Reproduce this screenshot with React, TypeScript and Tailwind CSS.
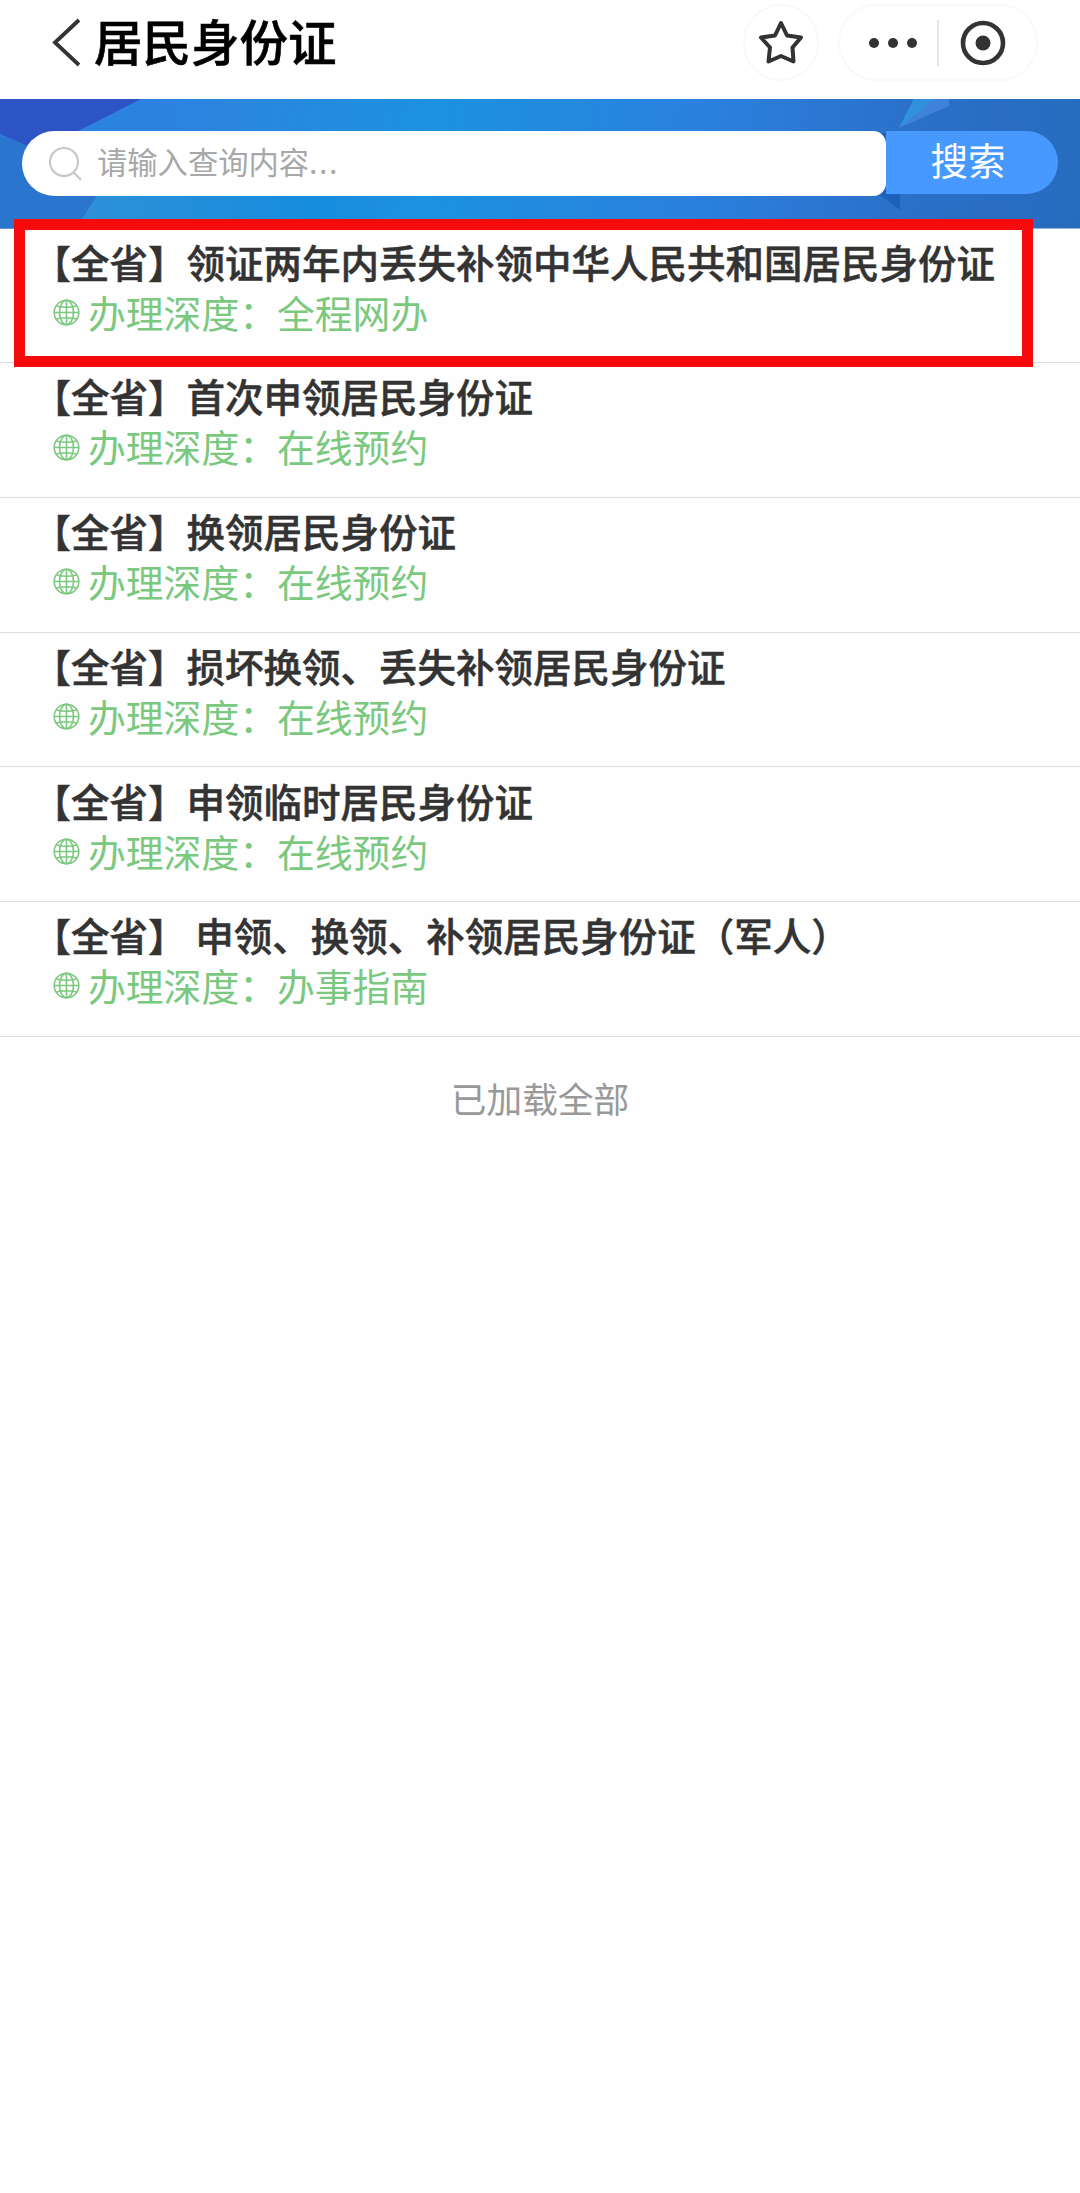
const rows = [
  { title: "【全省】领证两年内丢失补领中华人民共和国居民身份证", depth: "全程网办" },
  { title: "【全省】首次申领居民身份证", depth: "在线预约" },
  { title: "【全省】换领居民身份证", depth: "在线预约" },
  { title: "【全省】损坏换领、丢失补领居民身份证", depth: "在线预约" },
  { title: "【全省】申领临时居民身份证", depth: "在线预约" },
  { title: "【全省】 申领、换领、补领居民身份证（军人）", depth: "办事指南" },
];

function GlobeIcon() {
  return (
    <svg className="mt-[2px] h-[27px] w-[27px] shrink-0" viewBox="0 0 27 27" fill="none" stroke="#7bc87f" strokeWidth="1.6">
      <circle cx="13.5" cy="13.5" r="12.3" />
      <ellipse cx="13.5" cy="13.5" rx="7" ry="12.3" />
      <path d="M13.5 1v25M1 13.5h25M3.500 7q10 2.500 20 0M3.500 20q10-2.500 20 0" />
    </svg>
  );
}

function Header() {
  return (
    <header className="flex h-[99px] items-start bg-white">
      <svg className="ml-[50px] mt-[16px] h-[53px] w-[32px]" viewBox="0 0 32 53" fill="none" stroke="#333" strokeWidth="3.8">
        <path d="M29 4L5 26.500L29 49" />
      </svg>
      <h1 className="ml-[12px] mt-[4px] text-[48.500px] leading-[72px] font-medium whitespace-nowrap text-black [-webkit-text-stroke:0.6px_black]">居民身份证</h1>
      <div className="mt-[4px] mr-[42px] ml-auto flex gap-[19px]">
        <div className="flex h-[77px] w-[76px] items-center justify-center rounded-full border-2 border-[#f9f9f9]">
          <svg className="h-[46px] w-[46px]" viewBox="0 0 46 46" fill="none" stroke="#333" strokeWidth="4" strokeLinejoin="round">
            <path d="M23 3L29 15.500L43 17.500L34.500 27.500L35.500 41.500L23 36L10.500 41.500L12 27.500L3 17.500L17 15.500Z" />
          </svg>
        </div>
        <div className="flex h-[77px] w-[200px] items-center rounded-full border-2 border-[#f9f9f9]">
          <div className="ml-[29px] flex gap-[9px]">
            <i className="h-[10px] w-[10px] rounded-full bg-[#333]" />
            <i className="h-[10px] w-[10px] rounded-full bg-[#333]" />
            <i className="h-[10px] w-[10px] rounded-full bg-[#333]" />
          </div>
          <div className="ml-[20px] h-[46px] w-[2px] bg-[#e6e6e6]" />
          <svg className="ml-[21px] h-[46px] w-[46px]" viewBox="0 0 46 46">
            <circle cx="23" cy="23" r="20" fill="none" stroke="#333" strokeWidth="4.600" />
            <circle cx="23" cy="23" r="7.500" fill="#333" />
          </svg>
        </div>
      </div>
    </header>
  );
}

function SearchBar() {
  return (
    <div className="relative h-[129.500px]">
      <svg className="absolute inset-0 h-full w-full" viewBox="0 0 1080 129.5" preserveAspectRatio="none">
        <defs>
          <linearGradient id="sky" x1="0" x2="1080" y1="0" y2="130" gradientUnits="userSpaceOnUse">
            <stop offset="0" stopColor="#2c7fe0" />
            <stop offset="0.2" stopColor="#2b85df" />
            <stop offset="0.4" stopColor="#1c92e0" />
            <stop offset="0.65" stopColor="#2b80de" />
            <stop offset="0.85" stopColor="#2b6fc8" />
            <stop offset="1" stopColor="#266cbe" />
          </linearGradient>
          <linearGradient id="low" x1="78" x2="400" y1="0" y2="0" gradientUnits="userSpaceOnUse">
            <stop offset="0" stopColor="#2e90d8" />
            <stop offset="0.75" stopColor="#168dde" />
            <stop offset="1" stopColor="#168dde" stopOpacity="0" />
          </linearGradient>
        </defs>
        <rect width="1080" height="129.500" fill="url(#sky)" />
        <path d="M0 36L60 60H120L78 129.500H0Z" fill="#2a76ce" />
        <path d="M0 0H141L76 33L30 48L0 35Z" fill="#2d54c4" />
        <path d="M96 98L76 129.500H400V90H100Z" fill="url(#low)" />
        <path d="M914 0H949V7L899 29Z" fill="#3f82d9" />
        <path d="M914 0H934L899 29Z" fill="#3191dc" />
        <path d="M878 95L900 111V34H880Z" fill="#1c62b8" />
      </svg>
      <div className="relative flex pt-[32px] pl-[22px]">
        <div className="flex h-[65px] w-[864px] items-center rounded-l-[33px] rounded-r-[13px] bg-white pl-[26px]">
          <svg className="h-[36px] w-[36px]" viewBox="0 0 36 36" fill="none" stroke="#c8c8c8" strokeWidth="2.200">
            <circle cx="16" cy="16" r="14" />
            <path d="M25.500 26L33 34" />
          </svg>
          <span className="mb-[5px] ml-[13px] text-[30.300px] leading-[44px] text-[#a8a8a8]">
            请输入查询内容<span className="tracking-[1.5px]">...</span>
          </span>
        </div>
        <button className="h-[63px] w-[172px] rounded-r-[32px] bg-[#4798ff] pr-[8px] pb-[8px] text-[37.500px] leading-[55px] text-white">搜索</button>
      </div>
    </div>
  );
}

export default function App() {
  return (
    <div className="min-h-[2193px] w-[1080px] bg-[#fefefe] font-['Noto_Sans_CJK_SC',sans-serif]">
      <Header />
      <SearchBar />
      <main className="relative">
        <div className="absolute top-[-10px] left-[14px] h-[148.500px] w-[1019px] border-[11.500px] border-[#f50b0b]" />
        {rows.map((row) => (
          <section key={row.title} className="h-[134.700px] border-b-[1.500px] border-[#dcdcdc] pt-[7.300px] pl-[32.500px]">
            <h2 className="text-[38.500px] leading-[50px] font-medium whitespace-pre text-[#333] [-webkit-text-stroke:0.5px_#333]">{row.title}</h2>
            <div className="flex items-center pl-[20.500px] text-[#7bc87f]">
              <GlobeIcon />
              <p className="ml-[8px] text-[37.800px] leading-[51.400px] whitespace-nowrap">办理深度：{row.depth}</p>
            </div>
          </section>
        ))}
      </main>
      <p className="pt-[34px] text-center text-[35.700px] leading-[54px] text-[#999]">已加载全部</p>
    </div>
  );
}
